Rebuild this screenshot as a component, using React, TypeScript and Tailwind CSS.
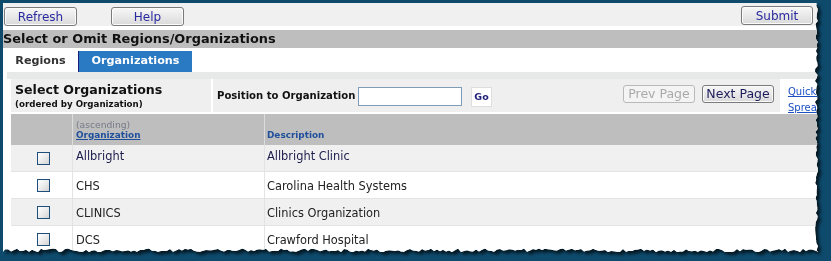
import React from "react";

function rng(seed: number) {
  let s = seed;
  return () => {
    s = (s * 9301 + 49297) % 233280;
    return s / 233280;
  };
}

function tornPolygon(W: number, H: number) {
  const r = rng(7);
  const pts: string[] = ["0px 0px"];
  for (let y = 0; y <= H - 4; y += 3) {
    pts.push(`${(W - 4 - r() * 3).toFixed(1)}px ${y}px`);
  }
  for (let x = W - 4; x >= 0; x -= 3) {
    pts.push(`${x}px ${(H - 4 - r() * 3.5).toFixed(1)}px`);
  }
  pts.push(`0px ${H - 4}px`);
  return `polygon(${pts.join(",")})`;
}

const FONT = { fontFamily: '"DejaVu Sans", Verdana, sans-serif' };

function Btn({
  children,
  className = "",
  disabled = false,
}: {
  children: React.ReactNode;
  className?: string;
  disabled?: boolean;
}) {
  return (
    <div
      className={
        "shrink-0 flex items-center justify-center rounded-[3px] border whitespace-nowrap " +
        (disabled
          ? "border-[#b9b9b9] bg-[#f4f4f4] text-[#a9a9a9] "
          : "border-[#7a7a7a] bg-linear-to-b from-[#f7f7f7] to-[#dadada] shadow-[inset_0_0_0_1px_#fbfbfb] ") +
        className
      }
    >
      {children}
    </div>
  );
}

function Checkbox() {
  return (
    <div className="shrink-0 w-[13px] h-[13px] border border-[#1e4f7c] bg-linear-to-br from-[#ffffff] via-[#ececec] to-[#d2d2d2]" />
  );
}

const rows = [
  { code: "Allbright", desc: "Allbright Clinic" },
  { code: "CHS", desc: "Carolina Health Systems" },
  { code: "CLINICS", desc: "Clinics Organization" },
  { code: "DCS", desc: "Crawford Hospital" },
];

export default function App() {
  const W = 819;
  const H = 253;
  return (
    <div
      className="w-[831px] h-[261px] bg-[#0e4a6c] pt-[3px] pl-[3px] overflow-hidden"
      style={FONT}
    >
      <div className="w-[819px] h-[253px] drop-shadow-[3px_3px_1.5px_rgba(0,0,0,0.65)]">
        <div
          className="w-[819px] h-[253px] bg-white overflow-hidden"
          style={{ clipPath: tornPolygon(W, H) }}
        >
          {/* toolbar */}
          <div className="h-[23px] bg-[#f0f0f0] flex items-start pt-[4px]">
            <Btn className="ml-[1px] w-[73px] h-[19px] text-[12px] text-[#2a2a9e]">
              Refresh
            </Btn>
            <Btn className="ml-[34px] w-[73px] h-[19px] text-[12px] text-[#2a2a9e]">
              Help
            </Btn>
            <Btn className="ml-auto mr-[9px] -mt-[1px] w-[72px] h-[19px] text-[12px] text-[#2a2a9e]">
              Submit
            </Btn>
          </div>
          {/* title */}
          <div className="mt-[4px] h-[18px] bg-[#bdbebd] text-[12.9px] leading-[18px] font-bold text-[#111] whitespace-nowrap">
            Select or Omit Regions/Organizations
          </div>
          {/* tabs */}
          <div className="h-[24px] flex items-end">
            <div className="shrink-0 w-[75px] h-[21px] flex items-center justify-center text-[11.2px] font-bold text-[#333]">
              Regions
            </div>
            <div className="shrink-0 w-[114px] h-[21px] border-l border-[#1c1c7a] bg-[#2a79c3] flex items-center justify-center text-[11.2px] font-bold text-white">
              Organizations
            </div>
          </div>
          <div className="ml-[4px] h-[7px] bg-[#e7e8e8]" />
          {/* panel */}
          <div className="ml-[8px]">
            <div className="h-[33px] flex">
              <div className="shrink-0 w-[200px] bg-[#efefef] pl-[4px] pt-[4px] text-[#111]">
                <div className="text-[12.6px] font-bold leading-[14px] whitespace-nowrap">
                  Select Organizations
                </div>
                <div className="text-[8.7px] font-bold leading-[12px] mt-[1px] whitespace-nowrap">
                  (ordered by Organization)
                </div>
              </div>
              <div className="shrink-0 ml-[2px] w-[567px] bg-[#efefef] flex items-center">
                <div className="shrink-0 w-[141px] pl-[4px] text-[10.1px] font-bold text-[#111] whitespace-nowrap">
                  Position to Organization
                </div>
                <div className="shrink-0 ml-[4px] mt-[2px] w-[104px] h-[19px] border border-[#7f9db9] bg-white" />
                <div className="shrink-0 ml-[9px] mt-[3px] w-[21px] h-[20px] border border-[#dedede] bg-white flex items-center justify-center text-[9.5px] font-bold text-[#20207a]">
                  Go
                </div>
                <Btn
                  disabled
                  className="ml-auto -mt-[3px] w-[72px] h-[18px] text-[12.5px]"
                >
                  Prev Page
                </Btn>
                <Btn className="ml-[7px] mr-[6px] -mt-[3px] w-[72px] h-[18px] text-[12.5px] text-[#1c1c5c]">
                  Next Page
                </Btn>
              </div>
              <div className="shrink-0 ml-[8px] pt-[5px] text-[10px] leading-[16px] text-[#1d4fc4] underline whitespace-nowrap">
                <div>Quick Search</div>
                <div>Spreadsheet</div>
              </div>
            </div>
            {/* table header */}
            <div className="mt-[2px] h-[31px] bg-[#bdbebd] flex">
              <div className="shrink-0 w-[62px] border-r border-[#dcdcdc]" />
              <div className="shrink-0 w-[192px] border-r border-[#dcdcdc] pl-[3px] pt-[5px]">
                <div className="text-[9.2px] leading-[11px] text-[#777a88]">
                  (ascending)
                </div>
                <div className="text-[8.9px] leading-[11px] font-bold text-[#1f4f9c] underline">
                  Organization
                </div>
              </div>
              <div className="flex-1 pl-[2px] pt-[16px] text-[8.9px] leading-[11px] font-bold text-[#1f4f9c]">
                Description
              </div>
            </div>
            {/* rows */}
            {rows.map((r, i) => (
              <div
                key={r.code}
                className={
                  "h-[27px] flex border-b border-[#e2e3e3] " +
                  (i % 2 === 0 ? "bg-[#eff0ef]" : "bg-white")
                }
              >
                <div className="shrink-0 w-[62px] border-r border-[#e2e3e3] flex items-center pl-[26px] pt-[1px]">
                  <Checkbox />
                </div>
                <div
                  className={
                    "shrink-0 w-[192px] border-r border-[#e2e3e3] pl-[3px] text-[11.4px] leading-[14px] " +
                    (i === 0 ? "pt-[4px] text-[#1d1d4d]" : "pt-[7px] text-[#222]")
                  }
                >
                  {r.code}
                </div>
                <div
                  className={
                    "flex-1 pl-[2px] text-[11.4px] leading-[14px] whitespace-nowrap " +
                    (i === 0 ? "pt-[4px] text-[#1d1d4d]" : "pt-[7px] text-[#222]")
                  }
                >
                  {r.desc}
                </div>
              </div>
            ))}
          </div>
        </div>
      </div>
    </div>
  );
}
